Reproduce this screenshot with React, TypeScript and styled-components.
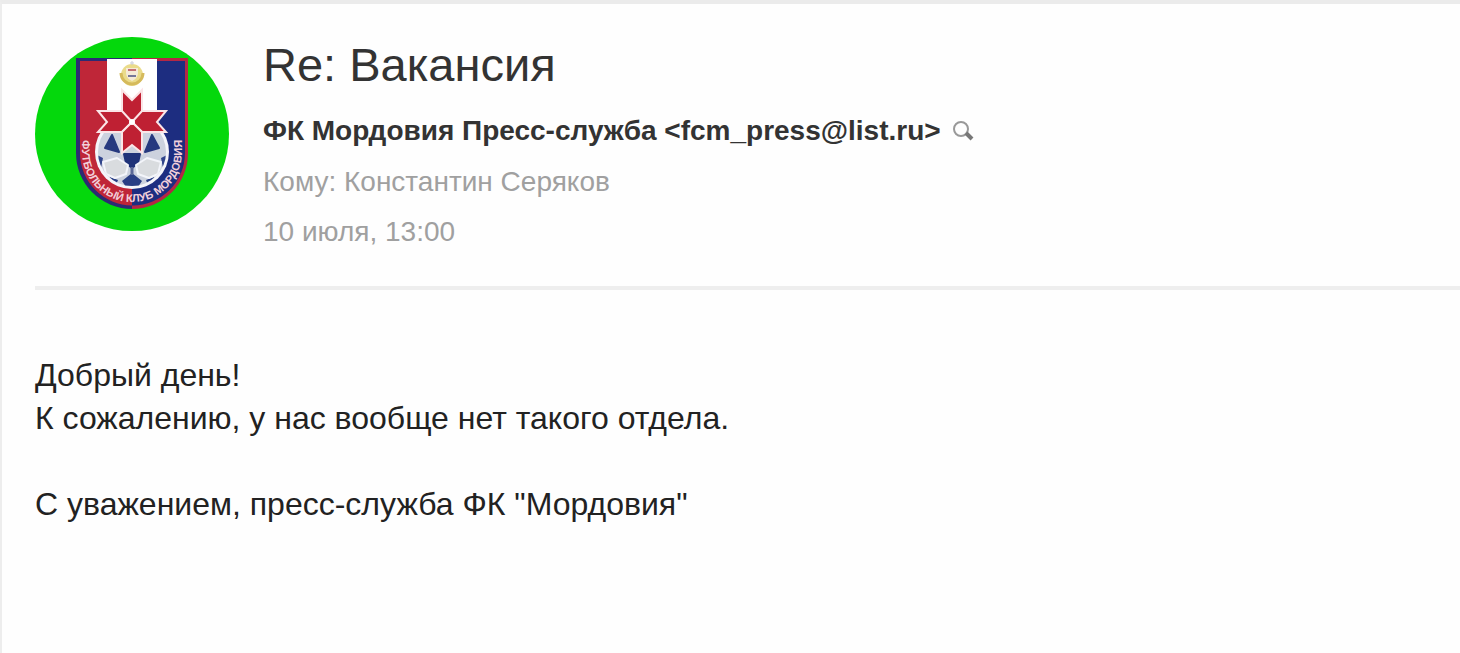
import React from 'react';
import styled, { createGlobalStyle } from 'styled-components';

const GlobalStyle = createGlobalStyle`
  *, *::before, *::after { box-sizing: border-box; }
  body {
    margin: 0;
    background: #fefefe;
    font-family: "Liberation Sans", Arial, sans-serif;
  }
`;

const Page = styled.main`
  min-height: 100vh;
  border-top: 4px solid #ebebeb;
  border-left: 2px solid #ededed;
  padding: 33px 0 32px 33px;
`;

const Header = styled.header`
  display: flex;
  align-items: flex-start;
  gap: 34px;
  padding-bottom: 29px;
  border-bottom: 4px solid #eeeeee;
`;

const Avatar = styled.svg`
  flex: none;
  width: 194px;
  height: 194px;
`;

const Details = styled.div`
  display: flex;
  flex-direction: column;
  min-width: 0;
`;

const Subject = styled.h1`
  margin: 0;
  font-size: 47px;
  line-height: 56px;
  font-weight: 400;
  color: #333;
`;

const Sender = styled.div`
  display: flex;
  align-items: center;
  gap: 12px;
  margin-top: 12px;
  font-size: 28px;
  line-height: 52px;
  font-weight: 700;
  color: #333;
`;

const SearchButton = styled.button`
  display: flex;
  padding: 0;
  border: 0;
  background: none;
  cursor: pointer;
`;

const Meta = styled.div`
  font-size: 28px;
  line-height: 50px;
  color: #a0a0a0;
`;

const Body = styled.article`
  padding-top: 64px;
  font-size: 32px;
  line-height: 43px;
  color: #222;
`;

const Paragraph = styled.p`
  margin: 0 0 43px;
`;

function Crest() {
  return (
    <Avatar viewBox="35 37 194 194" role="img" aria-label="ФК Мордовия">
      <defs>
        <clipPath id="left"><rect x="70" y="50" width="62" height="170" /></clipPath>
        <clipPath id="right"><rect x="132" y="50" width="62" height="170" /></clipPath>
        <clipPath id="ball"><circle cx="132" cy="152" r="34" /></clipPath>
        <path id="motto" d="M82 143 V152 A50 50 0 0 0 182 152 V143" />
      </defs>
      <circle cx="132" cy="134" r="97" fill="#04d80c" />
      <path d="M76 58 H188 V153 A56 56 0 0 1 76 153 Z" fill="#2b2b73" clipPath="url(#left)" />
      <path d="M76 58 H188 V153 A56 56 0 0 1 76 153 Z" fill="#b32745" clipPath="url(#right)" />
      <path d="M80 61 H185 V153 A52 52 0 0 1 80 153 Z" fill="#bf2638" clipPath="url(#left)" />
      <path d="M80 61 H185 V153 A52 52 0 0 1 80 153 Z" fill="#1d2d80" clipPath="url(#right)" />
      <rect x="107" y="59" width="50" height="85" fill="#fff" />

      <circle cx="132" cy="75" r="11" fill="#eadb8b" />
      <path d="M121 73 A11 11 0 0 0 143 73" fill="none" stroke="#d5ba5c" strokeWidth="3" />
      <path d="M126 68 H138 V73 Q138 78 132 81 Q126 78 126 73 Z" fill="#f5ead7" />
      <path d="M128 70 H136" stroke="#c46f75" strokeWidth="2" />
      <path d="M128 76 H136" stroke="#777798" strokeWidth="2" />
      <path d="M132 61 V65 M130 63 H134" stroke="#c9ccd8" strokeWidth="1" />

      <circle cx="132" cy="152" r="37" fill="#f5f5fa" />
      <circle cx="132" cy="152" r="34" fill="#ccd2de" />
      <g clipPath="url(#ball)">
        <path d="M112 135 L119 152 L105 148 Z M152 135 L145 152 L159 148 Z" fill="#26397f" stroke="#26397f" strokeWidth="2" strokeLinejoin="round" />
        <path d="M124 154 H140 L138 163 L132 168 L126 163 Z" fill="#1f3279" stroke="#1f3279" strokeWidth="2" strokeLinejoin="round" />
        <path d="M97 155 L103 158 L101 168 L95 165 Z M167 155 L161 158 L163 168 L169 165 Z" fill="#31458c" />
        <path d="M132 173 L142 181 L138 187 H126 L122 181 Z M110 177 L118 180 L116 185 L108 180 Z M154 177 L146 180 L148 185 L156 180 Z" fill="#293e85" />
        <path d="M132 167 V175" stroke="#5a6797" strokeWidth="3" />
        <path d="M117 158 L128 165 L126 174 L115 178 L106 174 L103 162 Z M147 158 L136 165 L138 174 L149 178 L158 174 L161 162 Z" fill="#d9dcdf" stroke="#f3f5fa" strokeWidth="2" strokeLinejoin="round" />
      </g>

      <g fill="#bf2033" stroke="#fbe5e7" strokeWidth="2">
        <path d="M122 90 L132 100 L142 90 V112 L132 122 L122 112 Z" />
        <path d="M98 111 H122 L132 122 L122 132 H98 L107 122 Z" />
        <path d="M166 111 H142 L132 122 L142 132 H166 L157 122 Z" />
        <path d="M122 132 L132 122 L142 132 V153 L132 145 L122 153 Z" />
      </g>
      <circle cx="132" cy="122" r="3" fill="#fff" />

      <text fontSize="11" fontWeight="700" fill="#f2cfda" textAnchor="middle">
        <textPath href="#motto" startOffset="50%">ФУТБОЛЬНЫЙ КЛУБ МОРДОВИЯ</textPath>
      </text>
    </Avatar>
  );
}

export default function App() {
  return (
    <>
      <GlobalStyle />
      <Page>
        <Header>
          <Crest />
          <Details>
            <Subject>Re: Вакансия</Subject>
            <Sender>
              <span>ФК Мордовия Пресс-служба &lt;fcm_press@list.ru&gt;</span>
              <SearchButton type="button" aria-label="Найти письма отправителя">
                <svg width="22" height="22" viewBox="0 0 22 22" fill="none">
                  <circle cx="8" cy="9" r="7" stroke="#999" strokeWidth="2" />
                  <path d="M13 13 L19 19" stroke="#777" strokeWidth="4" />
                </svg>
              </SearchButton>
            </Sender>
            <Meta>Кому: Константин Серяков</Meta>
            <Meta as="time">10 июля, 13:00</Meta>
          </Details>
        </Header>
        <Body>
          <Paragraph>
            Добрый день!
            <br />
            К сожалению, у нас вообще нет такого отдела.
          </Paragraph>
          <Paragraph>С уважением, пресс-служба ФК "Мордовия"</Paragraph>
        </Body>
      </Page>
    </>
  );
}
